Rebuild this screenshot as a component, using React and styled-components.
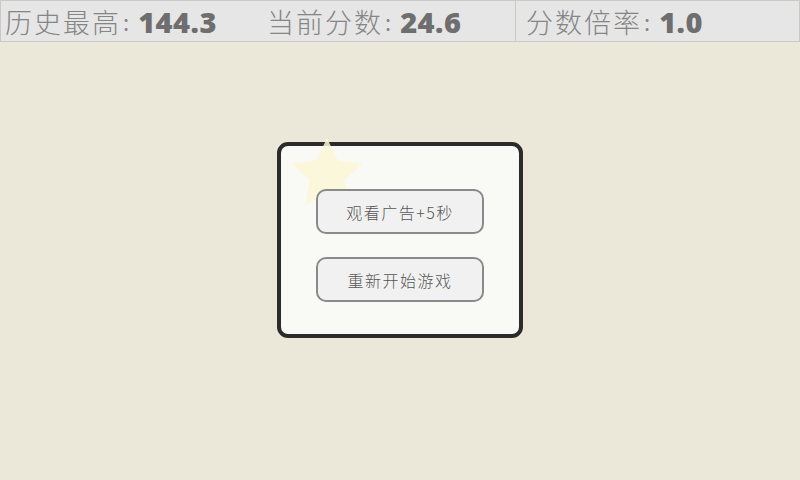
import React from "react";
import styled, { createGlobalStyle } from "styled-components";

const Global = createGlobalStyle`
  html, body { margin: 0; padding: 0; }
  body {
    background: #ebe8da;
    font-family: "Noto Sans CJK SC", "Noto Sans", sans-serif;
  }
  #root { height: 480px; }
`;

const Page = styled.div`
  width: 800px;
  height: 480px;
  display: flex;
  flex-direction: column;
  background: #ebe8da;
  overflow: hidden;
`;

const TopBar = styled.div`
  display: grid;
  grid-template-columns: 516px 1fr;
  height: 42px;
  flex: none;
`;

const Cell = styled.div`
  display: flex;
  align-items: center;
  background: #e6e6e6;
  border: 1px solid #c9c9c6;
  border-left-width: ${(p) => (p.$first ? 1 : 0)}px;
  padding-left: ${(p) => p.$pad}px;
  box-sizing: border-box;
  height: 42px;
`;

const Stat = styled.div`
  display: flex;
  align-items: center;
  width: ${(p) => p.$w || "auto"};
`;

const Label = styled.span`
  font-family: "Noto Sans CJK SC", sans-serif;
  font-weight: 300;
  font-size: 27px;
  color: #858585;
  letter-spacing: 2px;
  line-height: 1;
`;

const Colon = styled.span`
  font-family: "Noto Sans CJK SC", sans-serif;
  font-size: 22px;
  color: #858585;
  margin: 0 9px 0 2px;
  line-height: 1;
`;

const Value = styled.span`
  font-family: "Noto Sans", sans-serif;
  font-weight: 900;
  font-size: 29px;
  color: #6e6e6e;
  line-height: 1;
  letter-spacing: 0.5px;
`;

const Main = styled.div`
  flex: 1;
  display: flex;
  align-items: center;
  justify-content: center;
  padding-bottom: 42px;
`;

const Dialog = styled.div`
  position: relative;
  width: 246px;
  height: 196px;
  box-sizing: border-box;
  border: 4px solid #2b2b2b;
  border-radius: 11px;
  background: #f9f9f5;
  display: flex;
  flex-direction: column;
  align-items: center;
  padding-top: 43px;
  gap: 23px;
`;

const Star = styled.svg`
  position: absolute;
  left: 6px;
  top: -11px;
  width: 80px;
  height: 80px;
  pointer-events: none;
`;

const Button = styled.button`
  position: relative;
  width: 168px;
  height: 45px;
  box-sizing: border-box;
  border: 2px solid #8a8a8a;
  border-radius: 10px;
  background: #f1f1f1;
  color: #555;
  font-family: "Noto Sans CJK SC", sans-serif;
  font-weight: 300;
  font-size: 16px;
  letter-spacing: 1.5px;
  padding: 0;
  display: flex;
  align-items: center;
  justify-content: center;
`;

function StarShape() {
  const cx = 40, cy = 40, R = 37, r = 18;
  const pts = [];
  for (let i = 0; i < 10; i++) {
    const a = -Math.PI / 2 + (i * Math.PI) / 5;
    const rad = i % 2 === 0 ? R : r;
    pts.push(`${(cx + rad * Math.cos(a)).toFixed(1)},${(cy + rad * Math.sin(a)).toFixed(1)}`);
  }
  return (
    <Star viewBox="0 0 80 80">
      <polygon points={pts.join(" ")} fill="#fcf7d6" opacity="0.85" />
    </Star>
  );
}

export default function App() {
  return (
    <>
      <Global />
      <Page>
        <TopBar>
          <Cell $first $pad={4}>
            <Stat $w="262px">
              <Label>历史最高</Label>
              <Colon>:</Colon>
              <Value>144.3</Value>
            </Stat>
            <Stat>
              <Label>当前分数</Label>
              <Colon>:</Colon>
              <Value>24.6</Value>
            </Stat>
          </Cell>
          <Cell $pad={10}>
            <Stat>
              <Label>分数倍率</Label>
              <Colon>:</Colon>
              <Value>1.0</Value>
            </Stat>
          </Cell>
        </TopBar>
        <Main>
          <Dialog>
            <StarShape />
            <Button>观看广告+5秒</Button>
            <Button>重新开始游戏</Button>
          </Dialog>
        </Main>
      </Page>
    </>
  );
}
